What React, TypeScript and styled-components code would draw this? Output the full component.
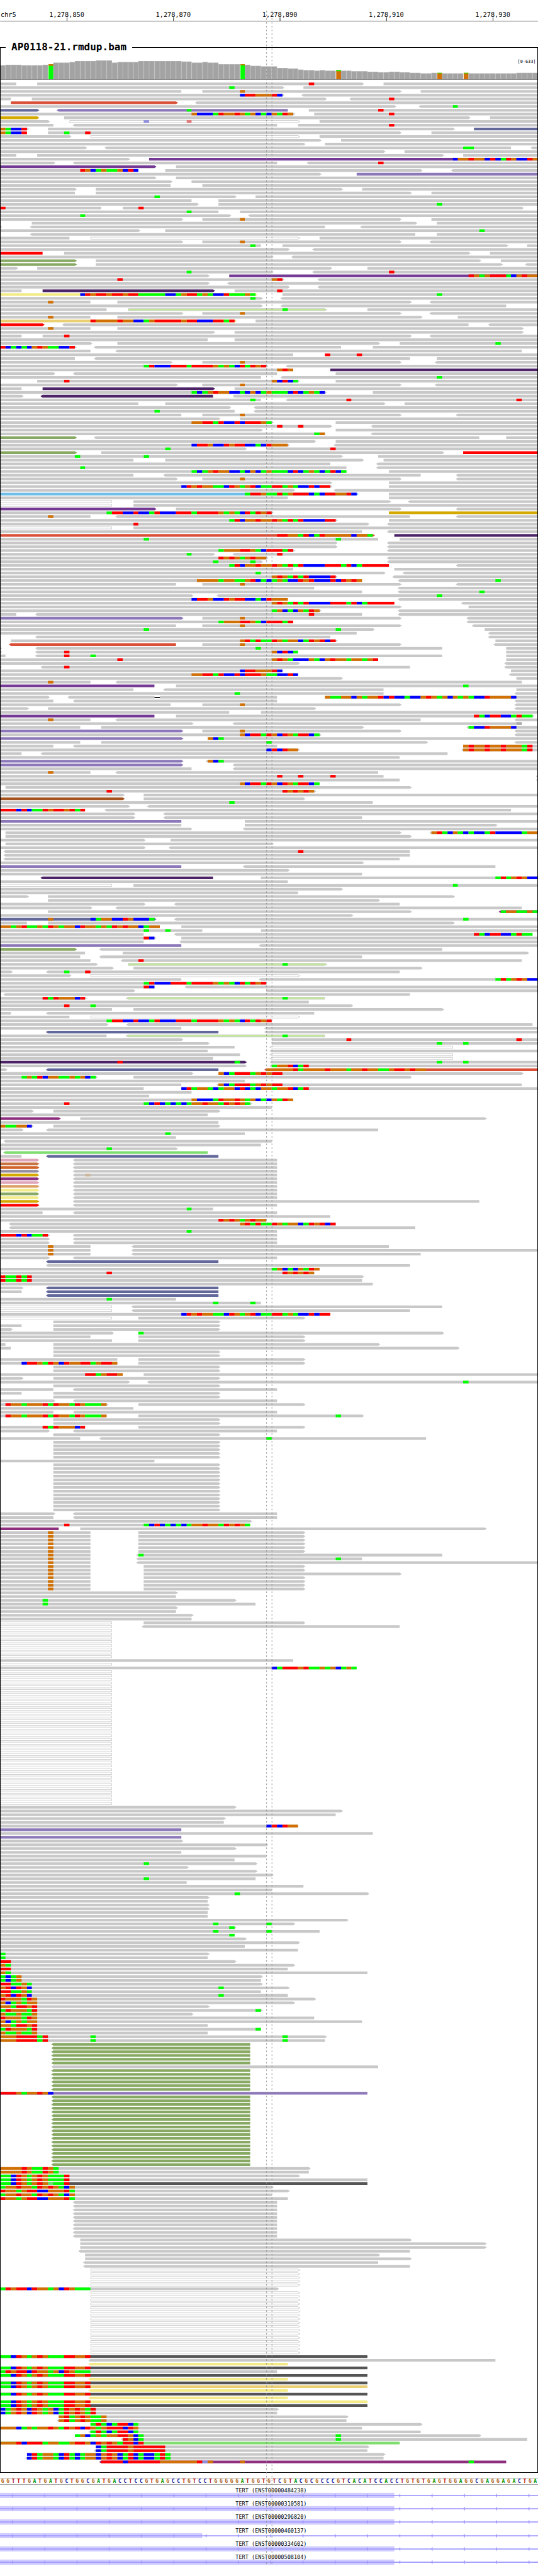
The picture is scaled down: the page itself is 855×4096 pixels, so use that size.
import React from "react";
import styled, { createGlobalStyle } from "styled-components";

const GlobalStyle = createGlobalStyle`
  body {
    margin: 0;
    background: #fff;
    color: #000;
    font-family: "DejaVu Sans Mono", monospace;
  }
`;

const BASES = 101;
const START = 1278838;
const VIEW = 1000;
const PITCH = 7;
const BAR = 5;
const toX = (col: number) => Math.round((col * VIEW) / BASES);

const BASE_COLORS: Record<string, string> = {
  A: "#00ff00",
  C: "#0000ff",
  G: "#d17105",
  T: "#ff0000",
  a: "#5fe665",
  c: "#8f8fdc",
  t: "#e27777",
  g: "#ccb69c",
  n: "#aaaaaa",
};

const READ_COLORS: Record<string, string> = {
  t: "#d94f37",
  s: "#63689a",
  v: "#8c78b8",
  y: "#d4a900",
  p: "#733993",
  k: "#4b2366",
  e: "#88a963",
  l: "#f2eb88",
  m: "#ead073",
  R: "#ff0000",
  a: "#c3e79c",
  b: "#70bde8",
  n: "#a55420",
  f: "#8e2e7e",
  G: "#80dd70",
  P: "#dfa5b9",
  o: "#c77240",
  u: "#d2652a",
  h: "#958da0",
  j: "#dca066",
  d: "#555555",
  w: "#ffffff",
};

const READ_GREY = "#c8c8c8";

/*
 * One line per pileup row, optionally prefixed by a repeat count ("6x").
 * A read is  [<]start-end[>][/colour][,position+bases ...]
 * where < and > mark the strand arrow.
 */
const PILEUP = `
0-3 7-68>,58T 72-101
0-53>,43A 57-101
0-34 38-75>,45G 79-101
0-53>,45CTTGGGTC <57-101
0-2 6-61> <66-101,73T
2-33>/t <37-101
0-74> <79-101,85A
0-7>/s <11-54/v,35A 58-101,71T
0-55>,36GCCCATGGTGAGCACGATG 59-101,73T
0-7>/y 12-88> 92-101
0-9> 13-56>/w,27c,35t 60-101
0-10 <14-52 56-101,73T
0-5>,0GACCT 9-85> 89-101/s
0-5,0GACCT 9-75>,12A,16T 81-101
0-13> 17-56>/w 60-101
0-60> 64-101
0-57> 61-101
0-16> <20-96,87AA <100-101
0-72> 76-101
0-3 7-83> 87-101
0-24> 28-101/p,85CGGTGGCTCATGCCTG
0-10> <14-52 <58-101,71T
0-29>/p 33-101
0-26,15TGCAGAAGCTC 31-79> <85-101
0-60> 67-101/v
0-29> 33-101
0-32> 36-101
0-32 38-101
0-14> 18-64> 68-101
0-14 18-77> 81-101
0-44>,29A 48-101
0-36 41-101
0-37> 41-101,82A
0-19,0T 23-98>,26T
0-41,35A 45-101
0-43>,15A <47-101
0-34> 38-75>,45G 81-101
6-78> 82-101
0-0> <6-61 <68-101
0-26> 31-101,90A
<6-78 82-101
0-13 17-56>/w 60-101
0-34> 38-75>,45G <81-101
0-49,47A 53-95> 99-101
0-54> <59-101
0-8/R 12-88> 92-101
0-51> <55-101
0-14>/e 18-90> 94-101
0-14>/e 18-94> <99-101
0-3> 7-62> 69-101
0-51>,35A <59-101,73T
0-39> 43-101/p,88TGAGTTTACGTGG
0-53>,22T,51GT <60-101
0-39> <43-101
0-54> <60-101
0-4 8-40>/k 44-101,52T
0-48>/l,15CTGTTGTTGTTAAAAACCAGTTAGACCTAAAGA 53-101,82A
0-49>,47A <53-101
0-17,9G 22-77> <81-101
0-49> <53-95
0-20 24-61>/a,53A 69-101
0-34> 38-75>,45G <81-101
0-17,9G 22-79> 86-101
0-44>/m,17TGGGGTGGCCAGTTTTTGTTCCCTTAT 48-101
0-8>/R <12-88 <92-101
0-17,9G 22-98>
0-40> 44-98>
0-4 8-77>,12T <81-101
0-39 44-101
0-17> 22-71> 75-101,93A
0-14>,0TCACACGTGAACCT <18-64 70-101
0-17 <22-98
0-55 61-101,61T,67T
0-14 <18-77 82-101
0-32> 38-75>,45G <82-101
0-50>,27ATCCCTTTATTTTGAGACTATGT <54-101
0-55,52GTG 62-101/k
0-10> <14-52 63-101
0-49 <53-101,82A
7-56>,12T,51GCTCA 63-101
0-33> 38-75>,45G <82-101
0-4 8-40>/k 44-101
0-61>,36ACAGTGGCCACGCAGAAACTCAGAC 70-101
0-4> <8-40/k <44-101
0-49,47A <54-101,65T,97T
0-26 31-72> 76-101
0-43> <48-101
0-44,29A <48-101
0-34 38-75>,45G <86-101
0-41> 45-101
0-51>,36GGTTATCCTCTTTGA 63-101
0-62>,52T,56T <70-101
0-49> 63-101
0-61,59AG <70-101
0-14>/e <18-90 95-101
0-59> 63-101
0-54>,36CTTGCCTGTTCCACTGGG <63-101
0-46>,31A 50-101,62T
0-14>/e 19-83> 87-101/R
0-64>,14A,27A 71-101
0-25 31-68> 72-101
0-62 <71-101
0-65,15A <71-101
0-65,36ACAGTGGCCACGCAGAAACTCAGACATCA 73-101
0-25 <31-79 <86-101
0-33> 38-75>,45G <86-101
0-62> 73-101
0-62>,34CTGTGGAACTGAGTCAATTAGACCTCTT 73-101
0-55> <63-101
0-67>/b,46ATTGAATAGTTTCACTTGGTC 73-101
0-54 73-101
0-21/w 25-73> <77-101
0-21/w 25-101
0-29>/p 33-75> <86-101
0-51>,20ATTCCTCCATCCCTTTATTTTGAGACTATGT 73-101/y
0-17,9G <22-77 <86-101
0-63>,43ATCGGTGGTGATATCCCCTT 73-101
0-69>,25T <73-101
0-21/w 25-101
0-68 <73-101
0-70>/t,52TTGGATCATGGGGGCGGA 74-101/k
0-71,27A,63A 75-101
2x0-63> <73-101
0-55>,41AGGGTTGACTTTAT <73-101
0-40>,35A <44-101,52T
0-50>,41TGTGAGTGG <73-101
0-49>,40A,47A <73-101
0-73,43ATCGGTGGTGATATCCCCTTTATCATTTTT <86-101
0-55 74-101
0-72>,48A <76-101
0-63>,51GTGATATCCCCT <74-101
0-68,37GGGGAGGAAGTCACAGACCTGTCCCTCTGTG <75-101,93A
0-33 38-75>,45G <86-101
0-59 <75-101
0-68 <75-101,90A
0-36> <41-101,82A
0-54,36CTTGCCTGTTCCACTGGG <75-101
0-74,51GTGATATCCCCTTTATCATTTTT <87-101
0-75> 88-101
0-60>,51AGCACGATG <75-101
0-3 <7-68,58T <75-101
0-34>/v 38-75>,45G <88-101
0-55,41AGGGTTGACTTTAT <88-101
0-33 38-75>,45G <89-101
0-70>,27A,63A 91-101
0-67 <92-101
<7-62 <92-101
2-63>,45GTATAATGAGGCATGTCT 93-101
<2-33/t 38-75>,45G <93-101
0-0> <7-83,48A 95-101
0-0> <7-56,12T,51GCTCA 95-101
0-1 <7-83,12T,17A 95-101
0-71,22T,51GTGACCCGACGTGGAGGAGT 95-101
0-56> <95-101
0-0> <8-77,12T <95-101
0-53,45CTTGGGTC 96-101
0-56,36GGTTATCCTCTTTGAACCTC <96-101
0-64> 97-101
0-17,9G <22-98
0-29/p 33-101,87A
0-25 <31-72 97-101
0-72,44A <97-101
0-9> <13-29 29-30/x 30-52 61-101,61GAAGGCGAGGTCTCCACCGTGAGCGAGACCTGGGGC
0-10 <14-52 <97-101
0-32 38-75>,45G <97-101
0-5> 9-59> <97-101
0-43 49-101
0-29/p 33-100>,89TACTTCCATAA
0-17,9G <22-79 <97-101
0-36> <44-98,97n
0-15 19-68> <88-101,88ACCTGGGGC
0-34>/v 38-75>,45G <97-101
0-60>,45GCTTATGCTGATTCA <97-101
0-34>/v 39-101,39GCA
0-15 19-80>,50A <97-101
0-10 <14-52 87-101,87GTGGTGGTGGGAT
0-56>,50CTCTGG <87-101,87GTGGTGGTGGGAT
0-4 <8-84
0-75
0-34>/v <39-101,39GCA
0-34>/v <44-101
0-36 <44-101
0-17,9G <22-71
0-72,52T,56T,62T <101-101
0-75 <101-101
0-60,45GCTTATGCTGATTCA
1-77>
0-59>,20T,53TGTGTG
0-23> 27-101
0-23>/n 27-57>
0-70,43A
0-24> <28-101
0-16,0TTTCTCAATGTTGTAT <20-96
0-25> <31-101
0-25> <31-68
0-34/v 46-101
0-34 46-93>
0-36 <46-101
1-75> <81-101,81GTACGACACCATCCCCCAGG
1-77>
0-27> 32-101
1-51>
0-27> <32-101
<1-77,56T
<1-77
<1-75
0-68>
0-34/v <46-93
0-54>
0-68
<8-40/k 49-101,93ATAGTGCC
0-54
0-21/w 25-101,85A
0-64>
0-56
0-5> 9-85>
9-71>
0-27> <33-75
0-17> <22-98
9-77> <94-101/f,94AGGAAGA
0-66>
0-29>/s,9G,17CAGGCCTGCCCA <33-101,87A
0-5 9-85>
0-30,0GGAGTAAGATGAGGCTGGAGATGTGGCAGG 34-101
0-38,27A,31A 49-101
0-27 <33-100,89TACTTCCATAA
0-29>,27TC 34-101
0-27 <34-101
0-34/v <49-101
0-14>/e <19-83
0-16 23-99>
0-15 <19-68
0-17 <23-98,26T
0-18> 24-61>/a,53A
0-21> 25-79>
0-2> <9-75,12A,16T
0-13> 17-56>/w
0-34 <49-101,93ATAGTGCC
0-50,27ATCCCTTTATTTTGAGACTATGT
0-29,27TC <35-101
0-25> 50-101
<1-77
0-16>,8TATGGGCT <24-61/a,53A
0-58
0-66>,12T,17A
0-21 25-83>
0-2 <9-59
0-13 17-56>/w
0-51,20ATTCCTCCATCCCTTTATTTTGAGACTATGT
0-20> <24-100
0-34 <50-101
<9-41/s <50-101
0-20 <24-61/a,53A
0-34> 51-101,65T,97T
0-39> 51-101,82A,87A
0-44 <51-85/w
0-39 <51-101
0-45 <51-85/w
0-40 <51-85/w
0-46>/k,22T,44A <51-101,82A,87A
0-46> <51-101,51AGGTCAT
0-1> <9-41/s <50-101/t,50GGGGGTAGGGGTGGGAGGTGGAAGTTGTGG
0-36> 41-98>,41GCATTTAGTGTT
0-18>,4AGATCGGAAGAGCA 25-77>
0-46
0-34 <41-98,41GCATTTAGTGTT
0-27 34-101,34CTAGGACAGGCTCACGGAGGTCAT
0-36
0-28
0-55,36GCCCATGGTGAGCACGATG
0-47>,12T,27ACTCACACAGGTGGATGTGA
0-51
0-6> 10-41>
0-39
0-11>/f 15-91>
0-41
0-6>,0GAAGGC 10-41>
0-4> <9-71
0-46,31A
0-33
<1-51
0-49
0-33>,20A
<1-39/G
0-4 <9-41/s
0-7>/P <14-52
0-7>/o <14-52
0-7>/u <14-52
0-7>/h <14-52
0-7>/y <14-52,16g
0-7>/f <14-52
0-7>/P <14-52
0-7>/j <14-52
0-7>/l <14-52
0-7>/e <14-52
0-7>/l <14-52
0-7>/y <14-90
0-7>/R <14-52
0-40,35A
0-8 <14-52
0-62
0-50,41TGTGAGTGG
<2-63,45GTATAATGAGGCATGTCT
<2-78
0-52,35A
0-9>,0TTTCTCAAT <14-52
2x0-9> <14-52
0-17,9G <25-73
0-17,9G <25-101
0-17,9G <25-79
0-9> <14-52
<9-41/s
<9-77
0-60,51AGCACGATG
0-59,20T,53TGTGTG
0-68>,0TAATAT
0-68,0TAATAT
0-70
0-4> <9-41/s
0-4 <9-41/s
<9-41/s
0-33,20A
0-49,40A,47A
0-21/w <25-83
0-21/w <25-77
0-62,34CTGTGGAACTGAGTCAATTAGACCTCTT
0-21/w 26-57>
10-41>
0-4 10-41>
0-2> 10-41>
0-21> 26-83>,26A
0-17 26-57>
0-21 26-57>
0-1 10-71>
0-2 10-86>
2x10-41>
0-22 26-57>
0-22,4CTTGATGCTGGTTAGTTG 26-57>
2x10-41>
0-23,16TTAGTTG 27-101
0-4> 10-41>
0-24> <28-101,87A
10-41>
0-10 <14-52
0-4 10-41>
10-41>
0-10> <14-52
0-20>,1TGGAGGGTATGGATGAAAG 26-57>
0-25
0-10 <14-52
0-20,1TGGAGGGTATGGATGAAAG 26-68>,63A
2x10-41>
0-16,8TATGGGCT 26-57>
0-9> <14-52
10-41>
0-15 <19-80,50A
5x10-41>
0-29
13x10-41>
0-10> <14-52
0-10 <14-52
0-47>
0-47,12T,27ACTCACACAGGTGGATGTGA
0-11/f 15-91>
6x0-17,9G 26-57>
0-17,9G <26-83,26A
0-17,9G <26-68,63A
0-17,9G <26-101
2x0-17,9G 27-57>
0-17,9G 27-75>
4x0-17,9G 27-57>
0-33>
0-33
0-44>,8A
0-48,8A
0-33>
0-33
0-36>
0-36
0-21/w 27-57>
0-21/w <27-75
8x0-21/w
0-55
0-21/w
0-67,51CATTTGTAAGAGCAGA
36x0-21/w
0-44>
0-64>
0-63
0-42>
0-42
0-56,50CTCTGG
0-34/v
0-70
0-34/v
0-34>
0-50>
0-44>
0-34
0-50
0-44
0-48>,27A
0-35>
0-48>
0-51>
0-48,27A
0-35
0-57
0-51
0-69>,44A
0-39>
0-39
2x0-39>
2x0-39
0-65>
0-55>,40A,50A
0-44>,43A
0-60,40A,50A
0-44,43A
0-46>
0-56>
0-46
0-56
0-39>,0A
0-39,0A
0-44>,0TT
0-55>,0GA
0-54,0TT
0-69,0GA
0-49>,0ACAG
0-49,0ACAG
0-49>,0TTAAGA
0-54>,0GTCTGC,41A
0-49,0TTAAGA
0-54,0GTCTGC,41A
0-59>,0TGGGATG
0-55>,0GCAGAGG
0-39>,0GGATTGT
0-49>,0ATGGGAT,48A
0-36>,0GAAGAAG
0-59,0TGGGATG
0-68,0GCAGAGG
0-39,0GGATTGT
0-49,0ATGGGAT,48A
0-39,0GAAGAAG
0-61>,0GGGTTTTAT,17A,53A
0-61,0GGGTTTTAT,17A,53A
6x<10-47/e
<10-71
6x<10-47/e
0-69/v,0TTTGAGGTGC
19x<10-47/e
0-58>,0GGGGTGAATGA
0-58,0GGGGTGAATGA
0-56>,0AACTGAGTGAAAT
0-69,0AACTGAGTGAAAT
0-69/d,0AACTGAGTGaAAT
0-51>,0AGGTGGATGTGACG
0-54>,0TGGAGTTCCGGGTA
0-51,0AGGTGGATGTGACG
0-54,0TGGAGTTCCGGGTA
10x<14-52
15-77>
2x15-91>
<15-77
16-71>
16-77>
<16-71
<16-77
5x17-56>/w
0-52>,0ATGTTCTGGAGCTGAAA
17x17-56>/w
0-69/d,0AACTGAGTGAAATTGGT
<17-93
<17-54/l
0-69/d,0AACTGAGTGAAATTGGT
0-52,0ATGTTCTGGAGCTGAAA
0-69/d,0AACTGAGTGAAATTGGT
<17-54/l
0-69/d,0AACTGAGTGAAATTGGT
0-69/m,0AACTGAGTGAAATTGGT
<17-54/l
0-69/d,0AACTGAGTGAAATTGGT
<17-54/l
0-69/l,0AACTGAGTGAAATTGGT
0-69/d,0AACTGAGTGAAATTGGT
0-52>,0CAGTGCTGAGCATGTGAT
0-52,0CAGTGCTGAGCATGTGAT
11-65>,11GTAGTGAAG
<11-65,11GTAGTGAAG
17-79>,17ATACATTCA
0-68,0GGGCAGAGGTGATGTCTGAGTTTCTG
<17-79,17ATACATTCA
14-90>,14AGCAGAGGTTGCA,63A
<23-99,23TGCA,63A
0-75/G,0GGGTCTTTAGGAAGTTGCTGTGATTCT
18-69>,18CATTTTGTTTTTT
<18-69,18CATTTTGTTTTTT
5-72>,5CTAGGACTACAGGCGTGCATCACCATA
<5-72,5CTAGGACTACAGGCGTGCATCACCATA
<19-95/f,19TTTTCTTTTTTGGGGGGGTcG,45G,88A
`;

interface Mismatch {
  pos: number;
  len: number;
  base: string;
}

interface ReadData {
  start: number;
  end: number;
  left: boolean;
  right: boolean;
  color: string;
  mismatches: Mismatch[];
}

function parseRead(token: string): ReadData {
  const [head, ...diffs] = token.split(",");
  const m = /^(<?)(\d+)-(\d+)(>?)(?:\/(\w))?$/.exec(head)!;
  const mismatches: Mismatch[] = [];
  diffs.forEach((diff) => {
    const d = /^(\d+)([A-Za-z]+)$/.exec(diff)!;
    let pos = Number(d[1]);
    (d[2].match(/(.)\1*/g) || []).forEach((run) => {
      mismatches.push({ pos, len: run.length, base: run[0] });
      pos += run.length;
    });
  });
  return {
    start: Number(m[2]),
    end: Number(m[3]),
    left: m[1] === "<",
    right: m[4] === ">",
    color: m[5] || "",
    mismatches,
  };
}

const ROWS: ReadData[][] = PILEUP.trim()
  .split("\n")
  .flatMap((line) => {
    const m = /^(?:(\d+)x)?(.*)$/.exec(line)!;
    const reads = m[2].split(" ").map(parseRead);
    return Array.from({ length: Number(m[1] || 1) }, () => reads);
  });

/* Depth bars: [number of bases, bar height, called base, height of the second allele, second allele] */
type Depth = [number, number, string?, number?, string?];
const DEPTH: Depth[] = [
  [1, 26], [3, 27], [4, 26], [1, 27], [1, 28, "A", 3, "G"], [3, 31], [1, 32],
  [4, 34], [3, 35], [1, 31], [4, 32], [8, 34], [2, 33], [2, 31], [1, 32],
  [2, 31], [4, 28], [1, 28, "A", 2, "G"], [1, 27], [2, 25], [3, 24], [2, 21],
  [2, 20], [1, 18], [2, 17], [1, 16], [1, 17], [2, 16], [1, 17, "G", 2, "A"],
  [2, 16], [3, 15], [2, 14], [2, 13], [2, 14], [2, 13], [2, 12], [2, 11],
  [1, 12], [1, 12, "G", 1, "A"], [4, 11], [1, 12, "G", 1, "A"], [9, 11],
  [4, 12],
];

const SEQUENCE =
  "GGTTTGATGATGCTGGCGATGACCTCCGTGAGCCTGTCCTGGGGGATGGTGTCGTACGCGCCCGTCACATCCACCTGTGTGAGTGGAGGCGAGGAGACTGA";

const LETTER_COLORS: Record<string, string> = {
  A: "#009600",
  C: "#101096",
  G: "#ad6010",
  T: "#b00808",
};

const GENES = [
  { id: "ENST00000484238", exonEnd: 74 },
  { id: "ENST00000310581", exonEnd: 74 },
  { id: "ENST00000296820", exonEnd: 74 },
  { id: "ENST00000460137", exonEnd: 38 },
  { id: "ENST00000334602", exonEnd: 74 },
  { id: "ENST00000508104", exonEnd: 74 },
];

const Page = styled.main`
  position: relative;
  width: 100%;
  padding-bottom: 17px;
  overflow: hidden;
`;

const Chart = styled.svg`
  display: block;
  width: 100%;
  height: auto;
  font-family: "DejaVu Sans Mono", monospace;
`;

const Track = styled.fieldset`
  margin: 31px 0 0;
  padding: 0;
  min-width: 0;
  border: 1px solid #000;
`;

const TrackTitle = styled.legend`
  margin-left: 8px;
  padding: 0 9px;
  font-size: 16px;
  line-height: 20px;
  font-weight: bold;
`;

const SequenceBar = styled.div`
  display: grid;
  grid-template-columns: repeat(${BASES}, 1fr);
  margin-top: 9px;
  border-top: 1px solid #aaa;
  border-bottom: 1px solid #aaa;
  font-size: 8px;
  line-height: 8px;
  font-weight: bold;
  text-align: center;
`;

const Letter = styled.span<{ $base: string }>`
  min-width: 0;
  color: ${(p) => LETTER_COLORS[p.$base]};
`;

const GeneList = styled.section`
  display: flex;
  flex-direction: column;
`;

const Guides = styled.svg`
  position: absolute;
  inset: 0;
  width: 100%;
  height: 100%;
  pointer-events: none;
`;

function Ruler() {
  return (
    <Chart viewBox="0 0 1000 40" role="img" aria-label="Chromosome ruler">
      <text x={1} y={32} fontSize={12}>chr5</text>
      {[12, 32, 52, 72, 92].map((col) => {
        const x = toX(col + 0.5);
        return (
          <g key={col}>
            <rect x={x} y={32} width={1} height={7} />
            <text x={x} y={32} fontSize={12} textAnchor="middle">
              {(START + col).toLocaleString("en-US")}
            </text>
          </g>
        );
      })}
      <rect x={0} y={39} width={1000} height={1} />
    </Chart>
  );
}

function Coverage() {
  let col = 0;
  const bars: React.ReactNode[] = [];
  DEPTH.forEach(([count, height, base, minor, minorBase]) => {
    for (let i = 0; i < count; i++, col++) {
      const x = toX(col);
      const w = toX(col + 1) - x;
      const y = 48 - height;
      bars.push(
        base ? (
          <g key={col}>
            <rect x={x + 1} y={y} width={w - 1} height={height} fill={BASE_COLORS[base]} />
            <rect x={x + 1} y={y} width={w - 1} height={minor} fill={BASE_COLORS[minorBase!]} />
          </g>
        ) : (
          <g key={col}>
            <rect x={x} y={y} width={w} height={height} fill="#afafaf" />
            <rect x={x + 1} y={y + 1} width={w - 2} height={height - 1} fill="#a3a3a3" />
          </g>
        )
      );
    }
  });
  return (
    <Chart viewBox="1 0 998 49" role="img" aria-label="Read depth">
      {bars}
      <rect x={0} y={48} width={1000} height={1} fill="#777" />
      <text x={996} y={17} fontSize={8} textAnchor="end">[0-633]</text>
    </Chart>
  );
}

function Read({ read, y }: { read: ReadData; y: number }) {
  const x1 = toX(read.start);
  const x2 = toX(read.end);
  const mid = y + BAR / 2;
  if (read.color === "x") {
    return <rect x={x1} y={y + 2} width={x2 - x1 + 1} height={2} fill="#000" />;
  }
  const outlined = read.color === "w" || read.color === "a";
  const inset = outlined ? 0.5 : 0;
  const points = [
    `${x1 + inset},${y + inset}`,
    `${x2 - inset},${y + inset}`,
    read.right ? `${x2 + 4},${mid}` : "",
    `${x2 - inset},${y + BAR - inset}`,
    `${x1 + inset},${y + BAR - inset}`,
    read.left ? `${x1 - 4},${mid}` : "",
  ].join(" ");
  return (
    <>
      <polygon
        points={points}
        fill={READ_COLORS[read.color] || READ_GREY}
        stroke={outlined ? READ_GREY : "none"}
      />
      {read.mismatches.map((mm) => (
        <rect
          key={mm.pos}
          x={toX(mm.pos)}
          y={y}
          width={toX(mm.pos + mm.len) - toX(mm.pos)}
          height={BAR}
          fill={BASE_COLORS[mm.base]}
        />
      ))}
    </>
  );
}

function Alignments() {
  return (
    <Chart viewBox="1 0 998 4450" role="img" aria-label="Aligned reads">
      {ROWS.map((reads, r) => (
        <g key={r}>
          {reads.map((read, i) => (
            <Read key={i} read={read} y={5 + r * PITCH} />
          ))}
        </g>
      ))}
    </Chart>
  );
}

function Gene({ id, exonEnd }: { id: string; exonEnd: number }) {
  const arrows = Array.from({ length: 17 }, (_, i) => 21 + i * 60);
  return (
    <Chart viewBox="0 0 1000 25" role="img" aria-label={`TERT ${id}`}>
      <rect x={0} y={15} width={toX(exonEnd)} height={10} fill="#d1ccff" />
      <rect x={0} y={19} width={1000} height={2} fill="#9f99ff" />
      {arrows.map((x) => (
        <polygon key={x} points={`${x},20 ${x + 3},16 ${x + 3},24`} fill="#9f99ff" />
      ))}
      <text x={504} y={14} fontSize={10} textAnchor="middle">
        {`TERT (${id})`}
      </text>
    </Chart>
  );
}

export default function App() {
  return (
    <>
      <GlobalStyle />
      <Page>
        <Ruler />
        <Track>
          <TrackTitle>AP0118-21.rmdup.bam</TrackTitle>
          <Coverage />
          <Alignments />
        </Track>
        <SequenceBar>
          {SEQUENCE.split("").map((base, i) => (
            <Letter key={i} $base={base}>{base}</Letter>
          ))}
        </SequenceBar>
        <GeneList>
          {GENES.map((gene) => (
            <Gene key={gene.id} {...gene} />
          ))}
        </GeneList>
        <Guides viewBox="0 0 1000 4791" preserveAspectRatio="none" aria-hidden="true">
          {[495.5, 505.5].map((x) => (
            <line key={x} x1={x} x2={x} y1={20} y2={4769} stroke="#888" strokeDasharray="3 4" />
          ))}
        </Guides>
      </Page>
    </>
  );
}
